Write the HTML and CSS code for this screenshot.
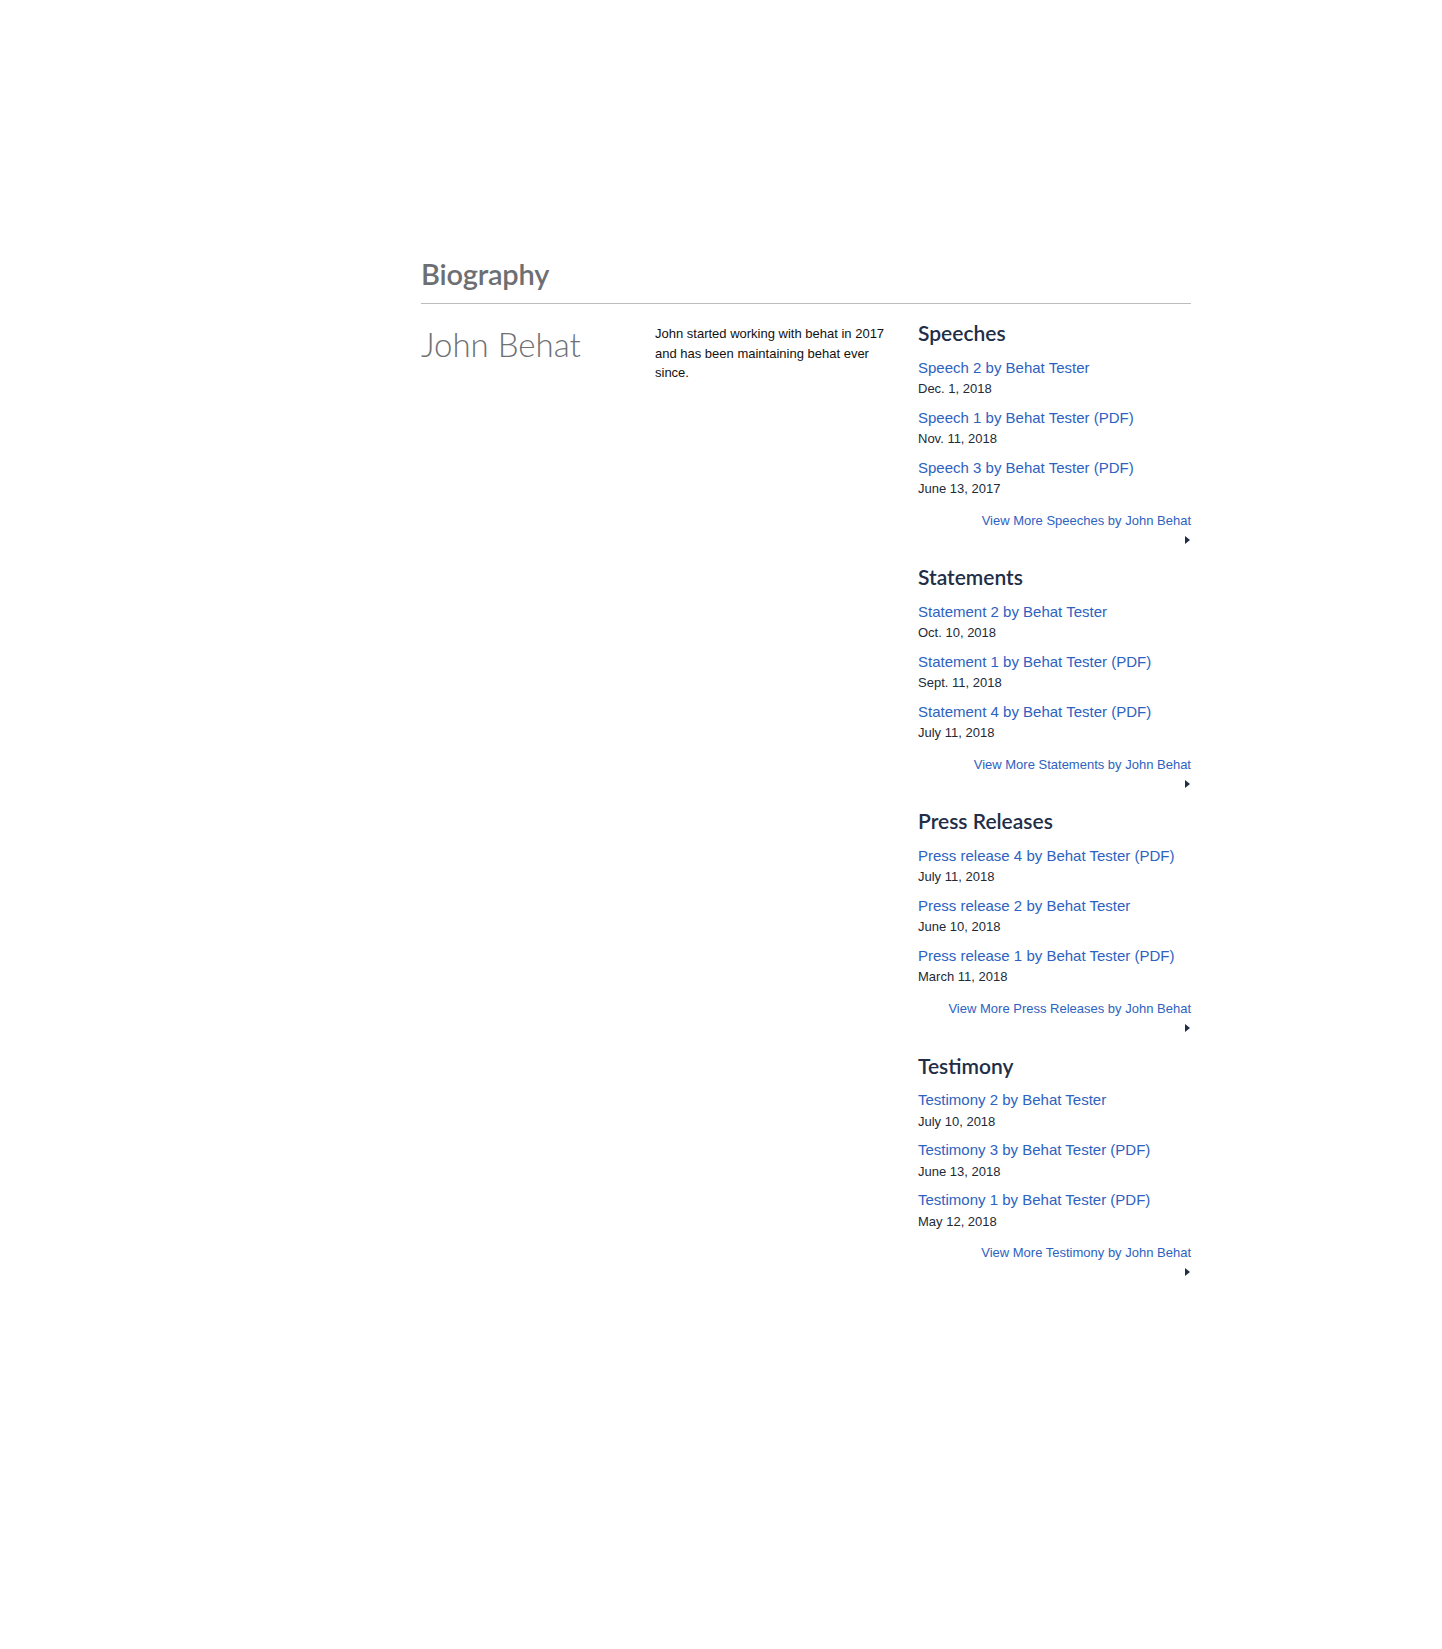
FILE: index.html
```html
<!DOCTYPE html>
<html lang="en">
<head>
<meta charset="utf-8">
<title>Biography - John Behat</title>
<link rel="stylesheet" href="styles.css">
</head>
<body>
<main class="page">
  <h1 class="page-title">Biography</h1>
  <div class="bio-row">
    <div class="bio-name">John Behat</div>
    <div class="bio-text">John started working with behat in 2017 and has been maintaining behat ever since.</div>
    <aside class="bio-side">
      <section class="sect">
        <h2 class="sect-title">Speeches</h2>
        <ul class="items">
          <li class="item"><a href="#">Speech 2 by Behat Tester</a><div class="date">Dec. 1, 2018</div></li>
          <li class="item"><a href="#">Speech 1 by Behat Tester (PDF)</a><div class="date">Nov. 11, 2018</div></li>
          <li class="item"><a href="#">Speech 3 by Behat Tester (PDF)</a><div class="date">June 13, 2017</div></li>
        </ul>
        <div class="more"><a href="#">View More Speeches by John Behat</a></div>
        <div class="more-arrow"><span class="tri"></span></div>
      </section>
      <section class="sect">
        <h2 class="sect-title">Statements</h2>
        <ul class="items">
          <li class="item"><a href="#">Statement 2 by Behat Tester</a><div class="date">Oct. 10, 2018</div></li>
          <li class="item"><a href="#">Statement 1 by Behat Tester (PDF)</a><div class="date">Sept. 11, 2018</div></li>
          <li class="item"><a href="#">Statement 4 by Behat Tester (PDF)</a><div class="date">July 11, 2018</div></li>
        </ul>
        <div class="more"><a href="#">View More Statements by John Behat</a></div>
        <div class="more-arrow"><span class="tri"></span></div>
      </section>
      <section class="sect">
        <h2 class="sect-title">Press Releases</h2>
        <ul class="items">
          <li class="item"><a href="#">Press release 4 by Behat Tester (PDF)</a><div class="date">July 11, 2018</div></li>
          <li class="item"><a href="#">Press release 2 by Behat Tester</a><div class="date">June 10, 2018</div></li>
          <li class="item"><a href="#">Press release 1 by Behat Tester (PDF)</a><div class="date">March 11, 2018</div></li>
        </ul>
        <div class="more"><a href="#">View More Press Releases by John Behat</a></div>
        <div class="more-arrow"><span class="tri"></span></div>
      </section>
      <section class="sect">
        <h2 class="sect-title">Testimony</h2>
        <ul class="items">
          <li class="item"><a href="#">Testimony 2 by Behat Tester</a><div class="date">July 10, 2018</div></li>
          <li class="item"><a href="#">Testimony 3 by Behat Tester (PDF)</a><div class="date">June 13, 2018</div></li>
          <li class="item"><a href="#">Testimony 1 by Behat Tester (PDF)</a><div class="date">May 12, 2018</div></li>
        </ul>
        <div class="more"><a href="#">View More Testimony by John Behat</a></div>
        <div class="more-arrow"><span class="tri"></span></div>
      </section>
    </aside>
  </div>
</main>
</body>
</html>
```

FILE: styles.css
```css
html, body {
  margin: 0;
  padding: 0;
  background: #ffffff;
}

body {
  font-family: "Liberation Sans", Arial, sans-serif;
  color: #222a38;
}

.page {
  width: 770px;
  margin-left: 421px;
  padding-top: 256px;
  padding-bottom: 200px;
}

.page-title {
  margin: 0;
  font-family: Lato, "Open Sans", sans-serif;
  font-weight: 600;
  font-size: 29px;
  letter-spacing: -0.2px;
  line-height: 36px;
  color: #6d6f72;
  padding-bottom: 11px;
  border-bottom: 1px solid #bdbdbd;
}

.bio-row {
  display: grid;
  grid-template-columns: 234px 263px 273px;
  align-items: start;
  padding-top: 16px;
}

.bio-name {
  margin-top: 5px;
  font-family: Lato, "Open Sans", sans-serif;
  font-weight: 300;
  font-size: 33px;
  line-height: 38px;
  color: #6f7175;
}

.bio-text {
  margin-top: 4px;
  padding-right: 25px;
  font-size: 13px;
  line-height: 19.5px;
  color: #111111;
}

.sect {
  margin-bottom: 14.7px;
}

.sect-title {
  margin: 0 0 10.5px;
  font-family: Lato, "Open Sans", sans-serif;
  font-weight: 600;
  font-size: 21px;
  line-height: 26px;
  color: #222e47;
}

.items {
  list-style: none;
  margin: 0;
  padding: 0;
}

.item {
  margin-bottom: 8px;
}

.item a {
  display: block;
  font-size: 15px;
  line-height: 22.5px;
  color: #2d62c0;
  text-decoration: none;
}

.date {
  font-size: 13px;
  line-height: 19.5px;
  color: #222a38;
}

.more {
  margin-top: 12px;
  text-align: right;
  font-size: 13px;
  line-height: 19.5px;
}

.more a {
  color: #2d62c0;
  text-decoration: none;
}

.more-arrow {
  height: 19.5px;
  display: flex;
  justify-content: flex-end;
  align-items: center;
  padding-right: 1px;
}

.tri {
  width: 0;
  height: 0;
  border-top: 4px solid transparent;
  border-bottom: 4px solid transparent;
  border-left: 5px solid #222e47;
}
```
